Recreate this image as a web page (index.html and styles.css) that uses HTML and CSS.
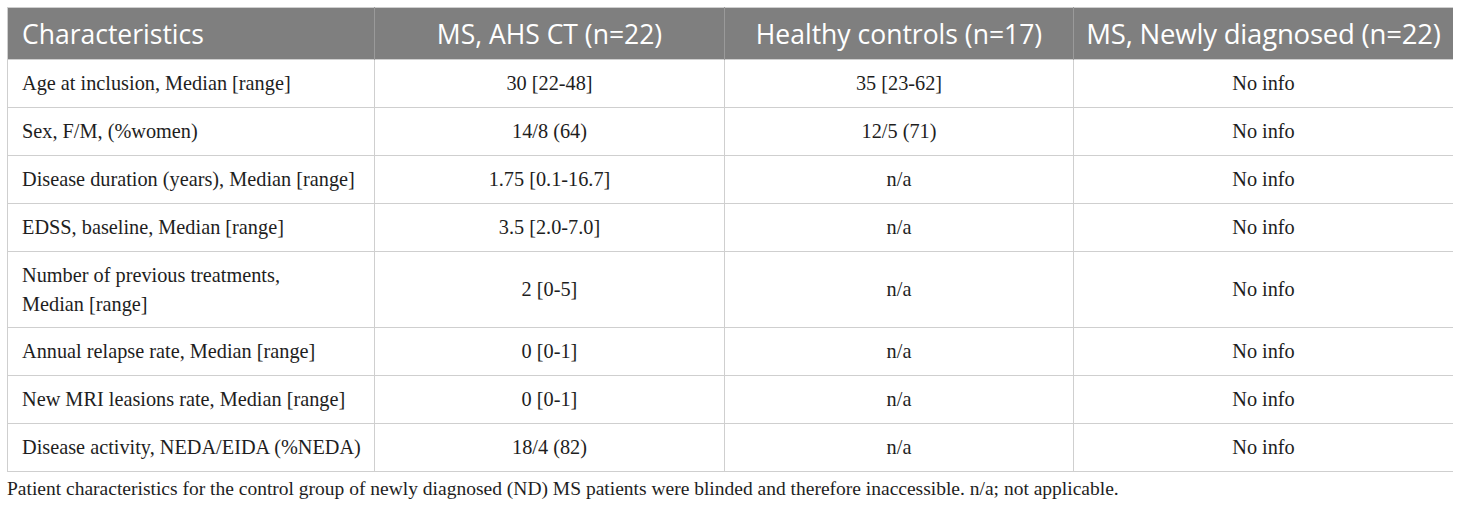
FILE: index.html
```html
<!DOCTYPE html>
<html lang="en">
<head>
    <meta charset="UTF-8">
    <title>Patient characteristics</title>
<link rel="stylesheet" href="styles.css">
</head>
<body>
<table class="chars">
    <colgroup>
        <col class="c1">
        <col class="c2">
        <col class="c3">
        <col class="c4">
    </colgroup>
    <thead>
    <tr>
        <th class="first">Characteristics</th>
        <th>MS, AHS CT (n=22)</th>
        <th>Healthy controls (n=17)</th>
        <th class="last">MS, Newly diagnosed (n=22)</th>
    </tr>
    </thead>
    <tbody>
    <tr>
        <td class="first">Age at inclusion, Median [range]</td>
        <td>30 [22-48]</td>
        <td>35 [23-62]</td>
        <td>No info</td>
    </tr>
    <tr>
        <td class="first">Sex, F/M, (%women)</td>
        <td>14/8 (64)</td>
        <td>12/5 (71)</td>
        <td>No info</td>
    </tr>
    <tr>
        <td class="first">Disease duration (years), Median [range]</td>
        <td>1.75 [0.1-16.7]</td>
        <td>n/a</td>
        <td>No info</td>
    </tr>
    <tr>
        <td class="first">EDSS, baseline, Median [range]</td>
        <td>3.5 [2.0-7.0]</td>
        <td>n/a</td>
        <td>No info</td>
    </tr>
    <tr class="tall">
        <td class="first">Number of previous treatments,<br>Median [range]</td>
        <td>2 [0-5]</td>
        <td>n/a</td>
        <td>No info</td>
    </tr>
    <tr>
        <td class="first">Annual relapse rate, Median [range]</td>
        <td>0 [0-1]</td>
        <td>n/a</td>
        <td>No info</td>
    </tr>
    <tr>
        <td class="first">New MRI leasions rate, Median [range]</td>
        <td>0 [0-1]</td>
        <td>n/a</td>
        <td>No info</td>
    </tr>
    <tr>
        <td class="first">Disease activity, NEDA/EIDA (%NEDA)</td>
        <td>18/4 (82)</td>
        <td>n/a</td>
        <td>No info</td>
    </tr>
    </tbody>
</table>
<p class="note">Patient characteristics for the control group of newly diagnosed (ND) MS patients were blinded and therefore inaccessible. n/a; not applicable.</p>
</body>
</html>
```

FILE: styles.css
```css
body{
    margin: 7px;
    background: #fff;
    font-family: "Liberation Serif", "Times New Roman", serif;
    color: #1e1e1e;
}
.chars{
    width: 1446px;
    table-layout: fixed;
    border-collapse: collapse;
    border: 1px solid #cfcfcf;
}
.c1{ width: 367px; }
.c2{ width: 350px; }
.c3{ width: 349px; }
.c4{ width: 380px; }
.chars th{
    background-color: #7f7f7f;
    color: #fff;
    font-family: "Open Sans", "Liberation Sans", sans-serif;
    font-weight: normal;
    font-size: 26.5px;
    height: 51px;
    padding: 0 6px;
    text-align: center;
    border-left: 1px solid #9a9a9a;
    white-space: nowrap;
}
.chars th.first{
    padding-left: 14px;
}
.chars th.last{
    font-size: 27.5px;
    letter-spacing: -0.2px;
}
.chars td{
    font-size: 20.3px;
    height: 47px;
    padding: 0 14px;
    text-align: center;
    border: 1px solid #cfcfcf;
    white-space: nowrap;
}
.chars .first{
    text-align: left;
    border-left: none;
}
.chars .tall td{
    height: 75px;
    line-height: 29px;
}
.note{
    margin: 6px 0 0 0;
    font-size: 19.5px;
}
```
